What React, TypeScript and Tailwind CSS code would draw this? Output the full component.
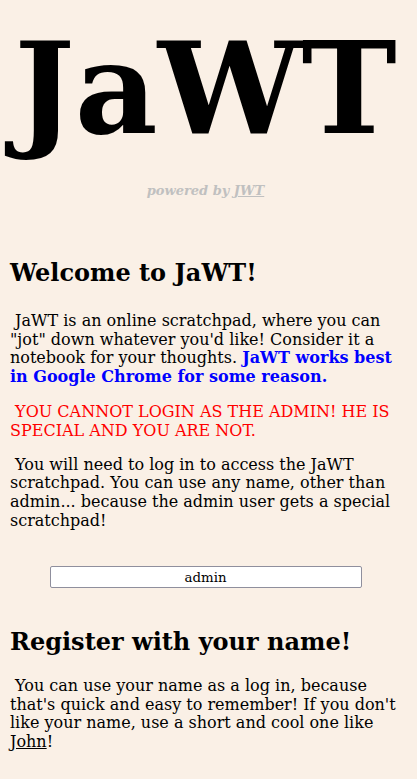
export default function App() {
  return (
    <div className="min-h-[779px] bg-[#faf0e6] pl-[10px] pr-[16px] pb-8 text-black font-['DejaVu_Serif',serif]">
      {/* title */}
      <header className="pt-[14px] text-center">
        <h1 className="text-[128px] font-bold leading-[1.164]">JaWT</h1>
        <p className="mt-[20px] text-[13px] font-bold italic text-[#c0c0c0] leading-[1.164]">
          powered by <a className="underline">JWT</a>
        </p>
      </header>

      <section className="mt-[61px]">
        <h2 className="text-[24px] font-bold leading-[1.164]">Welcome to JaWT!</h2>
        <p className="mt-[25px] text-[16px] leading-[1.164]">
          {"\u00a0"}JaWT is an online scratchpad, where you can "jot" down whatever you'd like! Consider it a notebook for
          your thoughts. <strong className="text-[#0000ff]">JaWT works best in Google Chrome for some reason.</strong>
        </p>
        <p className="mt-[17px] text-[16px] leading-[1.164] text-[#ff0000]">
          {"\u00a0"}YOU CANNOT LOGIN AS THE ADMIN! HE IS SPECIAL AND YOU ARE NOT.
        </p>
        <p className="mt-[15px] text-[16px] leading-[1.164]">
          {"\u00a0"}You will need to log in to access the JaWT scratchpad. You can use any name, other than admin...
          because the admin user gets a special scratchpad!
        </p>
      </section>

      <form className="mt-[36px] flex justify-center">
        <input
          type="text"
          defaultValue="admin"
          className="block h-[22px] w-[312px] rounded-[2px] border border-[#8f8f9d] bg-white text-center text-[13.33px] font-['DejaVu_Serif',serif]"
        />
      </form>

      <section className="mt-[40px]">
        <h2 className="text-[24px] font-bold leading-[1.164]">Register with your name!</h2>
        <p className="mt-[21px] text-[16px] leading-[1.164]">
          {"\u00a0"}You can use your name as a log in, because that's quick and easy to remember! If you don't like your
          name, use a short and cool one like <a className="underline">John</a>!
        </p>
      </section>
    </div>
  );
}
